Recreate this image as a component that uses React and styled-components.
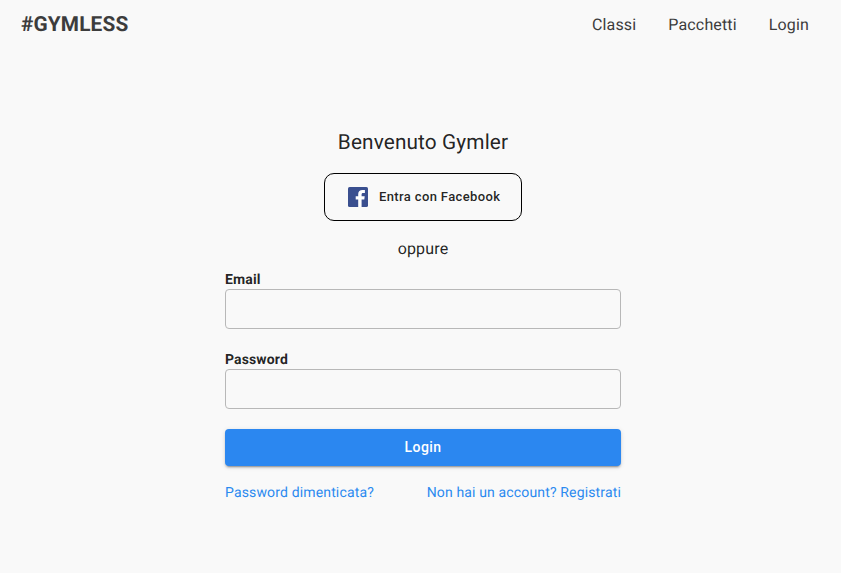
import React from 'react';
import styled, { createGlobalStyle } from 'styled-components';

const GlobalStyle = createGlobalStyle`
  * { box-sizing: border-box; }
  body { margin: 0; background: #f9f9f9; color: rgba(0, 0, 0, 0.87); font-family: Roboto, sans-serif; -webkit-font-smoothing: antialiased; text-rendering: geometricPrecision; }
`;
const Page = styled.div`
  min-height: 573px;
  background: #f9f9f9;
`;
const Header = styled.header`
  display: flex;
  align-items: center;
  justify-content: space-between;
  height: 48px;
  padding: 0 32px 0 21px;
`;
const Brand = styled.a`
  padding-top: 2px;
  font-size: 20.8px;
  font-weight: 700;
  line-height: 24px;
  letter-spacing: 0.15px;
  color: #3c3c3c;
`;
const Nav = styled.nav`
  display: flex;
  gap: 32px;
  padding-top: 1px;
`;
const NavLink = styled.a`
  font-size: 16px;
  line-height: 24px;
  letter-spacing: 0.15px;
  color: #3c3c3c;
`;
const Main = styled.main`
  display: flex;
  flex-direction: column;
  width: 396px;
  margin: 79px 0 0 225px;
`;
const Title = styled.h1`
  margin: 0;
  font-size: 20.8px;
  font-weight: 400;
  line-height: 32px;
  letter-spacing: 0.12px;
  text-align: center;
`;
const FacebookButton = styled.button`
  display: flex;
  align-items: center;
  align-self: center;
  width: 198px;
  height: 48px;
  margin-top: 14px;
  padding: 0 0 0 20px;
  gap: 8px;
  border: 1px solid #000;
  border-radius: 10px;
  background: transparent;
  color: rgba(0, 0, 0, 0.87);
  font: 500 13px/24px Roboto, sans-serif;
  letter-spacing: 0.37px;
  white-space: nowrap;
`;
const Divider = styled.p`
  margin: 16px 0 0;
  font-size: 16px;
  line-height: 24px;
  letter-spacing: 0.15px;
  text-align: center;
`;
const Field = styled.label`
  display: block;
  height: 60px;
  margin-top: ${(p) => p.$top}px;
`;
const FieldLabel = styled.span`
  display: block;
  height: 20px;
  font-size: 14px;
  font-weight: 700;
  line-height: 22px;
  letter-spacing: 0.13px;
`;
const Input = styled.input`
  display: block;
  width: 100%;
  height: 40px;
  border: 1px solid #b8b8b8;
  border-radius: 4px;
  background: transparent;
  outline: none;
`;
const SubmitButton = styled.button`
  height: 37px;
  margin-top: 20px;
  padding: 0 0 1px;
  border: 0;
  border-radius: 4px;
  background: #2b87f0;
  color: #fff;
  font: 500 14px/24px Roboto, sans-serif;
  letter-spacing: 0.4px;
  box-shadow: 0 3px 1px -2px rgba(0, 0, 0, 0.2), 0 2px 2px rgba(0, 0, 0, 0.14), 0 1px 5px rgba(0, 0, 0, 0.12);
`;
const Links = styled.div`
  display: flex;
  justify-content: space-between;
  margin-top: 17px;
`;
const TextLink = styled.a`
  font-size: 14px;
  line-height: 20px;
  letter-spacing: 0.15px;
  color: #2b8af0;
`;

const FacebookIcon = () => (
  <svg width="26" height="26" viewBox="0 0 26 26" aria-hidden="true">
    <rect x="3" y="3" width="20" height="20" rx="1.6" fill="#3a4f8f" />
    <path fill="#fff" d="M13.200 23v-7.500h-2.500v-3.200h2.500v-2.200c0-2.800 1.700-4.200 4.200-4.200 1.200 0 2.200.1 2.500.1v2.900h-1.700c-1.300 0-1.600.6-1.600 1.500v1.900h3.100l-.4 3.200h-2.700V23z" />
  </svg>
);

export default function App() {
  return (
    <Page>
      <GlobalStyle />
      <Header>
        <Brand>#GYMLESS</Brand>
        <Nav>
          <NavLink>Classi</NavLink>
          <NavLink>Pacchetti</NavLink>
          <NavLink>Login</NavLink>
        </Nav>
      </Header>
      <Main>
        <Title>Benvenuto Gymler</Title>
        <FacebookButton type="button">
          <FacebookIcon />
          Entra con Facebook
        </FacebookButton>
        <Divider>oppure</Divider>
        <Field $top={8}>
          <FieldLabel>Email</FieldLabel>
          <Input type="email" />
        </Field>
        <Field $top={20}>
          <FieldLabel>Password</FieldLabel>
          <Input type="password" />
        </Field>
        <SubmitButton type="button">Login</SubmitButton>
        <Links>
          <TextLink>Password dimenticata?</TextLink>
          <TextLink>Non hai un account? Registrati</TextLink>
        </Links>
      </Main>
    </Page>
  );
}
